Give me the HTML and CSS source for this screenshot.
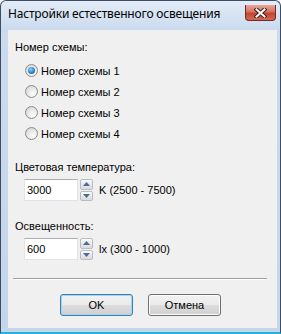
FILE: index.html
```html
<!DOCTYPE html>
<html>
<head>
    <meta charset="UTF-8">
    <title>Настройки естественного освещения</title>
    <link rel="stylesheet" href="styles.css">
</head>
<body>
    <div class="window">
        <div class="titlebar">
            <span class="title">Настройки естественного освещения</span>
            <span class="close">
                <svg width="13" height="10" viewBox="0 0 13 10">
                    <path d="M2.5 1.5 L10.5 8.5 M10.5 1.5 L2.5 8.5" stroke="#3b2020" stroke-width="4" stroke-linecap="square"/>
                    <path d="M2.5 1.5 L10.5 8.5 M10.5 1.5 L2.5 8.5" stroke="#fff" stroke-width="2" stroke-linecap="square"/>
                </svg>
            </span>
        </div>

        <div class="client">
            <div class="label">Номер схемы:</div>
            <div class="radios">
                <div class="radio checked"><span class="dot"></span>Номер схемы 1</div>
                <div class="radio"><span class="dot"></span>Номер схемы 2</div>
                <div class="radio"><span class="dot"></span>Номер схемы 3</div>
                <div class="radio"><span class="dot"></span>Номер схемы 4</div>
            </div>

            <div class="label section">Цветовая температура:</div>
            <div class="spin-row">
                <div class="spin-input">3000</div>
                <div class="spin-buttons">
                    <span class="spin-btn"><svg width="7" height="4" viewBox="0 0 7 4"><path d="M0 4 L3.5 0 L7 4 Z" fill="#4a6a9c"/></svg></span>
                    <span class="spin-btn"><svg width="7" height="4" viewBox="0 0 7 4"><path d="M0 0 L3.5 4 L7 0 Z" fill="#4a6a9c"/></svg></span>
                </div>
                <span class="unit">K (2500 - 7500)</span>
            </div>

            <div class="label section second">Освещенность:</div>
            <div class="spin-row">
                <div class="spin-input">600</div>
                <div class="spin-buttons">
                    <span class="spin-btn"><svg width="7" height="4" viewBox="0 0 7 4"><path d="M0 4 L3.5 0 L7 4 Z" fill="#4a6a9c"/></svg></span>
                    <span class="spin-btn"><svg width="7" height="4" viewBox="0 0 7 4"><path d="M0 0 L3.5 4 L7 0 Z" fill="#4a6a9c"/></svg></span>
                </div>
                <span class="unit">lx (300 - 1000)</span>
            </div>

            <div class="separator"></div>

            <div class="buttons">
                <button class="btn default">OK</button>
                <button class="btn">Отмена</button>
            </div>
        </div>
    </div>
</body>
</html>
```

FILE: styles.css
```css
body {
    margin: 0;
    font-family: "Liberation Sans", Arial, sans-serif;
    font-size: 11px;
    color: #000;
    background: #fff;
}

.window {
    width: 281px;
    height: 334px;
    box-sizing: border-box;
    border: 1px solid #3d4e64;
    border-bottom: 2px solid #2ab0e0;
    border-radius: 6px 6px 0 0;
    background: linear-gradient(#e3ecf7, #cbdbee 28px, #c4d6ec);
    padding: 0 3px 4px 7px;
    display: flex;
    flex-direction: column;
}

/* заголовок окна */
.titlebar {
    height: 29px;
    display: flex;
    align-items: flex-start;
    justify-content: space-between;
}

.title {
    font-family: "Noto Sans", "Open Sans", sans-serif;
    font-size: 12px;
    line-height: 16px;
    letter-spacing: -0.18px;
    margin-top: 5px;
    color: #000;
}

.close {
    width: 31px;
    height: 16px;
    box-sizing: border-box;
    margin-top: 4px;
    margin-right: 1px;
    border: 1px solid #6b2b26;
    border-top: none;
    border-radius: 0 0 4px 4px;
    background: linear-gradient(#eaa898, #d4725e 45%, #c2452e 55%, #d46a50);
    display: flex;
    align-items: center;
    justify-content: center;
}

.client {
    flex: 1;
    background: #f0f0f0;
    padding: 11px 10px 0 7px;
}

.label {
    line-height: 13px;
}

.radios {
    margin-top: 6px;
    padding-left: 10px;
}

.radio {
    height: 21px;
    display: flex;
    align-items: center;
}

.dot {
    width: 11px;
    height: 11px;
    border: 1px solid #8d8d8d;
    border-radius: 50%;
    margin-right: 3px;
    background: radial-gradient(circle at 65% 70%, #ffffff, #e9e9e9 45%, #cfcfcf);
    box-sizing: content-box;
    display: flex;
    align-items: center;
    justify-content: center;
}

.radio.checked .dot::after {
    content: "";
    width: 7px;
    height: 7px;
    border-radius: 50%;
    background: radial-gradient(circle at 40% 35%, #8fd6fb, #2a83c8 55%, #0f4f8f);
}

.section {
    margin-top: 17px;
}

.section.second {
    margin-top: 19px;
}

.spin-row {
    margin-top: 5px;
    padding-left: 9px;
    height: 22px;
    display: flex;
    align-items: center;
}

.spin-input {
    width: 54px;
    height: 22px;
    box-sizing: border-box;
    border: 1px solid #e2e3ea;
    border-top-color: #abadb3;
    background: #fff;
    padding-left: 2px;
    display: flex;
    align-items: center;
}

.spin-buttons {
    margin-left: 2px;
    width: 13px;
    height: 22px;
    display: flex;
    flex-direction: column;
    gap: 1px;
}

.spin-btn {
    flex: 1;
    border: 1px solid #b8bcc4;
    border-radius: 2px;
    background: linear-gradient(#fbfbfb, #e8e8e8 50%, #dcdcdc);
    display: flex;
    align-items: center;
    justify-content: center;
}

.unit {
    margin-left: 6px;
}

.separator {
    margin: 18px 0 0 -2px;
    border-top: 1px solid #a0a0a0;
    border-bottom: 1px solid #fff;
}

.buttons {
    margin-top: 14px;
    padding-left: 45px;
    display: flex;
    gap: 15px;
}

.btn {
    width: 73px;
    height: 22px;
    font-family: "Liberation Sans", Arial, sans-serif;
    font-size: 11px;
    color: #000;
    border: 1px solid #707070;
    border-radius: 3px;
    background: linear-gradient(#f2f2f2, #ebebeb 50%, #dddddd 50%, #cfcfcf);
    box-shadow: inset 0 0 0 1px #fcfcfc;
    padding: 0;
}

.btn.default {
    border-color: #3c7fb1;
    box-shadow: inset 0 0 0 1px #9fd6f5;
}
```
